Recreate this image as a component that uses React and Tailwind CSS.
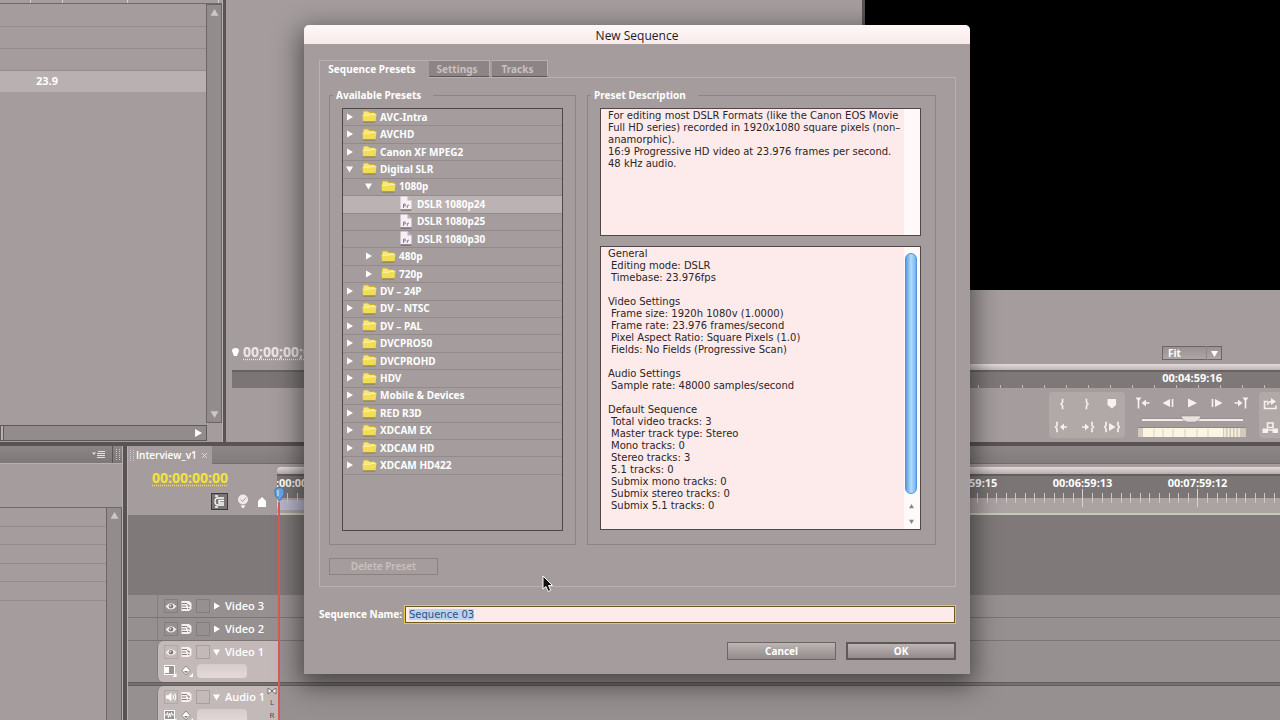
import React, { useEffect, useRef, useState } from "react";

const presets = [
  { name: "AVC-Intra", depth: 0 },
  { name: "AVCHD", depth: 0 },
  { name: "Canon XF MPEG2", depth: 0 },
  { name: "Digital SLR", depth: 0, open: true },
  { name: "1080p", depth: 1, open: true },
  { name: "DSLR 1080p24", depth: 2, file: true },
  { name: "DSLR 1080p25", depth: 2, file: true },
  { name: "DSLR 1080p30", depth: 2, file: true },
  { name: "480p", depth: 1 },
  { name: "720p", depth: 1 },
  { name: "DV – 24P", depth: 0 },
  { name: "DV – NTSC", depth: 0 },
  { name: "DV – PAL", depth: 0 },
  { name: "DVCPRO50", depth: 0 },
  { name: "DVCPROHD", depth: 0 },
  { name: "HDV", depth: 0 },
  { name: "Mobile & Devices", depth: 0 },
  { name: "RED R3D", depth: 0 },
  { name: "XDCAM EX", depth: 0 },
  { name: "XDCAM HD", depth: 0 },
  { name: "XDCAM HD422", depth: 0 },
];

const indents = ["pl-[3px]", "pl-[22px]", "pl-[57px]"];

const settings = [
  { title: "General", lines: ["Editing mode: DSLR", "Timebase: 23.976fps"] },
  {
    title: "Video Settings",
    lines: [
      "Frame size: 1920h 1080v (1.0000)",
      "Frame rate: 23.976 frames/second",
      "Pixel Aspect Ratio: Square Pixels (1.0)",
      "Fields: No Fields (Progressive Scan)",
    ],
  },
  { title: "Audio Settings", lines: ["Sample rate: 48000 samples/second"] },
  {
    title: "Default Sequence",
    lines: [
      "Total video tracks: 3",
      "Master track type: Stereo",
      "Mono tracks: 0",
      "Stereo tracks: 3",
      "5.1 tracks: 0",
      "Submix mono tracks: 0",
      "Submix stereo tracks: 0",
      "Submix 5.1 tracks: 0",
    ],
  },
];

/* ---------- icons ---------- */

function Triangle({ dir = "right", className = "w-[7px] h-[7px] text-white" }) {
  const shapes = {
    right: "1,0 7,3.5 1,7",
    down: "0,1 7,1 3.5,7",
    up: "0,6 7,6 3.5,0",
  };
  return (
    <svg viewBox="0 0 7 7" className={`shrink-0 ${className}`} fill="currentColor">
      <polygon points={shapes[dir]} />
    </svg>
  );
}

function FolderIcon() {
  return (
    <svg width="15" height="13" viewBox="0 0 15 13" className="shrink-0">
      <path d="M1 2 Q1 0.5 2.5 0.5 H6 L7.5 2 H12 Q13 2 13 3 V11 H1 Z" fill="#cfae30" />
      <path d="M1.5 1.5 H6 L7.5 3 H12.5 V5 H1.5 Z" fill="#f6e680" />
      <path d="M0.5 4.5 H8 L9 3.7 H14.5 L13.5 11.5 H1 Z" fill="#f2dd55" />
      <path d="M1.5 5.2 H8.3 L9.2 4.4 H13.5" stroke="#fdf6b8" strokeWidth="1" fill="none" />
      <path d="M1 12 H13.5" stroke="#8b7a3c" strokeWidth="1" />
    </svg>
  );
}

function PresetIcon() {
  return (
    <svg width="12" height="15" viewBox="0 0 12 15" className="shrink-0">
      <path d="M0.5 0.5 H7.5 L11.5 4.5 V13.5 H0.5 Z" fill="#f8eff4" />
      <path d="M7.5 0.5 V4.5 H11.5 Z" fill="#b8aebb" />
      <path d="M3.5 12 V8 H5.2 V10 H3.5 M7.3 12 V9.2 M7.3 9.8 L9 9" stroke="#8d7f9b" strokeWidth="1" fill="none" />
      <path d="M0.5 14 H11.5" stroke="#5b5458" strokeWidth="1" />
    </svg>
  );
}

function EyeIcon() {
  return (
    <svg width="12" height="9" viewBox="0 0 12 9">
      <path d="M0.5 4.5 Q6 -2 11.5 4.5 Q6 10.5 0.5 4.5 Z" fill="#f4ecec" />
      <circle cx="6" cy="4.3" r="2.2" fill="#7d7676" />
      <circle cx="5.4" cy="3.7" r="0.8" fill="#fff" />
    </svg>
  );
}

function SpeakerIcon() {
  return (
    <svg width="13" height="12" viewBox="0 0 13 12" fill="none" stroke="#fff" strokeWidth="1.2">
      <path d="M1 4 H3.5 L7 1 V11 L3.5 8 H1 Z" fill="#fff" stroke="none" />
      <path d="M8.5 4 Q9.7 6 8.5 8 M10.3 2.3 Q12.8 6 10.3 9.7" />
    </svg>
  );
}

function SyncIcon() {
  return (
    <svg width="11" height="10" viewBox="0 0 11 10">
      <path d="M0.5 0 H8 L10.5 2 V8 L8 10 H0.5 Z" fill="#f8f0f0" />
      <path d="M1 2.5 H6 M1 5 H5 M1 7.5 H6 M7 3 V5 H9 M7 7.5 H8.5" stroke="#857e7e" strokeWidth="1" fill="none" />
    </svg>
  );
}

function DiamondIcon() {
  return (
    <svg width="12" height="12" viewBox="0 0 12 12">
      <path d="M5 1 L9 5.5 L5 10 L1 5.5 Z" fill="#fff" stroke="#7d7676" strokeWidth="0.8" />
      <path d="M3 6 H7 L5 8.5 Z" fill="#8d8686" />
      <path d="M12 8 V12 H8 Z" fill="#fff" />
    </svg>
  );
}

function StyleIcon({ audio }) {
  return (
    <svg width="13" height="12" viewBox="0 0 13 12">
      <rect x="0.5" y="0.5" width="10" height="9" fill="#9b9393" stroke="#fff" />
      {audio ? (
        <path d="M1 5 H2.5 L3.5 2.5 L4.5 7.5 L5.5 3 L6.5 7 L7.5 2.5 L8.5 5 H10" stroke="#fff" fill="none" />
      ) : (
        <rect x="1" y="2" width="4" height="6" fill="#fff" />
      )}
      <path d="M12.5 8 V12 H8.5 Z" fill="#fff" />
    </svg>
  );
}

// line = stroked part, solid = filled part
const transport = {
  "Set In Point": { line: "M9.5 3.5 H8.5 V6.5 L7 8 L8.5 9.5 V12.5 H9.5" },
  "Set Out Point": { line: "M6.5 3.5 H7.5 V6.5 L9 8 L7.5 9.5 V12.5 H6.5" },
  "Set Marker": { solid: "M3.5 3 H12 V9 L8 12.5 L3.5 9 Z" },
  "Go to In Point": {
    line: "M4 3.5 H3 V6.5 L1.5 8 L3 9.5 V12.5 H4 M9 8 H13",
    solid: "M6 8 L10 4.5 V11.5 Z",
  },
  "Go to Out Point": {
    line: "M12 3.5 H13 V6.5 L14.5 8 L13 9.5 V12.5 H12 M3 8 H7",
    solid: "M10 8 L6 4.5 V11.5 Z",
  },
  "Play In to Out": {
    line: "M3 3.5 H2 V6.5 L0.5 8 L2 9.5 V12.5 H3 M13 3.5 H14 V6.5 L15.5 8 L14 9.5 V12.5 H13",
    solid: "M5 4 L11.5 8 L5 12 Z",
  },
  "Go to Previous Edit": {
    line: "M3.5 5 V13.5 M10 8 H14.5",
    solid: "M0.5 2.5 H6.5 L3.5 6.5 Z M6.5 8 L11 4.5 V11.5 Z",
  },
  "Step Back": { line: "M12.5 4 V12", solid: "M10 4 L2.5 8 L10 12 Z" },
  Play: { solid: "M4 3.5 L13 8 L4 12.5 Z" },
  "Step Forward": { line: "M3.5 4 V12", solid: "M6 4 L13.5 8 L6 12 Z" },
  "Go to Next Edit": {
    line: "M12.5 5 V13.5 M1.5 8 H6",
    solid: "M9.5 2.5 H15.5 L12.5 6.5 Z M9.5 8 L5 4.5 V11.5 Z",
  },
  Loop: { line: "M6 5.5 H2.5 V12.5 H14 V9.5 M5.5 9 Q6 5.5 10 5.5", solid: "M9 2 L14 5.5 L9 9 Z" },
  "Safe Margins": {
    line: "M5.5 4 H11 V8.5 H5.5 Z M6 11 H11",
    solid: "M0.5 9.5 H6 V14 H0.5 Z M10.5 9.5 H16 V14 H10.5 Z",
  },
};

function TransportButton({ name }) {
  const { line, solid } = transport[name];
  return (
    <button type="button" aria-label={name} className="flex items-center justify-center">
      <svg width="16" height="16" viewBox="0 0 16 16">
        {line && <path d={line} fill="none" stroke="#f8f0f0" strokeWidth="1.6" />}
        {solid && <path d={solid} fill="#f8f0f0" />}
      </svg>
    </button>
  );
}

/* ---------- workspace panels ---------- */

function ProjectPanel() {
  return (
    <section className="flex w-[223px] shrink-0 flex-col border-r border-[#b8b0b0]">
      <div className="flex h-1 shrink-0 border-b border-[#6f6969]">
        <span className="w-[31px] border-r border-[#d8d0d0]" />
        <span className="w-8 border-r border-[#d8d0d0]" />
        <span className="w-[65px] border-r border-[#d8d0d0]" />
        <span className="w-[91px] border-r border-[#d8d0d0]" />
      </div>
      <div className="flex min-h-0 flex-1">
        <div className="flex-1">
          <div className="h-[23px] border-b border-[#958d8d]" />
          <div className="h-[22px] border-b border-[#958d8d]" />
          <div className="h-[22px] border-b border-[#958d8d]" />
          <div className="flex h-[21px] items-center bg-[#b9b1b1] pl-9 text-[11px] font-bold text-white">
            23.9
          </div>
        </div>
        <div className="flex w-4 flex-col items-center justify-between border border-[#6b6565] bg-[#938c8c] py-1">
          <Triangle dir="up" className="h-2 w-[9px] text-[#cfc6c6]" />
          <Triangle dir="down" className="h-2 w-[9px] text-[#cfc6c6]" />
        </div>
      </div>
      <div className="mt-[2px] mb-px flex h-4 w-[207px] shrink-0 items-center justify-between border border-[#5f5959] bg-[#938c8c] pr-1">
        <span className="h-full w-[3px] border-r border-[#5f5959] bg-[#b9b1b1]" />
        <Triangle className="h-[10px] w-2 text-white" />
      </div>
    </section>
  );
}

function SourceMonitor() {
  return (
    <section className="flex min-w-0 flex-1 flex-col justify-end pl-[6px]">
      <div className="flex items-center gap-1 text-[14px] leading-[18px] font-bold text-[#eee5ea]">
        <svg width="7" height="9" viewBox="0 0 7 9" className="mt-px" fill="#fff">
          <path d="M0 3 Q0 0 3.5 0 Q7 0 7 3 L5 8 H2 Z" />
        </svg>
        <span className="underline decoration-dotted underline-offset-2">00;00;00;00</span>
      </div>
      <div className="mt-[9px] mb-[54px] h-[18px] border-t-2 border-[#696363] bg-[#7b7575]" />
    </section>
  );
}

function ProgramMonitor() {
  return (
    <section className="flex w-[415px] shrink-0 flex-col">
      <div className="flex-1 bg-black" />
      <div className="flex h-[74px] items-end justify-end pr-[58px] pb-1">
        <div className="relative flex">
          <select
            aria-label="Zoom level"
            className="h-[14px] w-[60px] appearance-none border border-[#6b6565] bg-gradient-to-b from-[#9a9292] to-[#aea6a6] pl-[5px] text-[10px] leading-3 font-bold text-white"
          >
            <option>Fit</option>
          </select>
          <span className="pointer-events-none absolute inset-y-0 right-1 flex items-center border-l border-[#8d8585] pl-1">
            <Triangle dir="down" />
          </span>
        </div>
      </div>
      <div className="h-[6px] bg-gradient-to-b from-[#e5dbdb] to-[#bdb4b4]" />
      <div className="flex h-[18px] flex-col items-end justify-between border-t-2 border-[#696363] bg-[#7e7878]">
        <span className="mr-[58px] text-[11px] leading-[11px] font-bold text-white">00:04:59:16</span>
        <svg width="100%" height="3">
          <defs>
            <pattern id="programTicks" width="22" height="3" x="3" patternUnits="userSpaceOnUse">
              <rect width="1" height="3" fill="#c3bbbb" />
            </pattern>
          </defs>
          <rect width="100%" height="3" fill="url(#programTicks)" />
        </svg>
      </div>
      <div className="flex h-[54px] justify-end gap-[10px] pt-1">
        <div className="grid h-[46px] w-[76px] grid-cols-3 grid-rows-2 rounded bg-[#b1a8a8]">
          {["Set In Point", "Set Out Point", "Set Marker", "Go to In Point", "Go to Out Point", "Play In to Out"].map(
            (name) => (
              <TransportButton key={name} name={name} />
            )
          )}
        </div>
        <div className="flex h-[46px] w-[114px] flex-col">
          <div className="flex h-[21px] items-center justify-between">
            {["Go to Previous Edit", "Step Back", "Play", "Step Forward", "Go to Next Edit"].map((name) => (
              <TransportButton key={name} name={name} />
            ))}
          </div>
          <svg width="114" height="25" viewBox="0 0 114 25">
            <path d="M7 7 H108" stroke="#f3eaea" strokeWidth="2" />
            <path d="M7 5.5 H108" stroke="#8b8383" strokeWidth="0.5" />
            <path d="M46 3 H66 L64 7 L60 9 H52 L48 7 Z" fill="#eae0e0" stroke="#8b8383" strokeWidth="0.5" />
            <rect x="3" y="14" width="108" height="10" fill="#d3cabd" />
            <rect x="8" y="15" width="80" height="9" fill="#fbf6e2" />
            <path
              d="M6 16 V24 M19 16 V24 M28 16 V24 M38 16 V24 M50 16 V24 M62 16 V24 M73 16 V24"
              stroke="#d8d0bd"
            />
            <path
              d="M90 15 V24 M93.5 15 V24 M97 15 V24 M100.5 15 V24 M104 15 V24"
              stroke="#fbf6e2"
              strokeWidth="1.5"
            />
            <path d="M3 14.5 H111" stroke="#8f8780" />
          </svg>
        </div>
        <div className="grid h-[46px] w-[21px] grid-rows-2 rounded-l bg-[#b1a8a8]">
          <TransportButton name="Loop" />
          <TransportButton name="Safe Margins" />
        </div>
      </div>
    </section>
  );
}

function EffectsPanel() {
  return (
    <section className="flex w-[123px] shrink-0 flex-col border-r border-[#b8b0b0]">
      <div className="flex h-[18px] items-center justify-end border-b border-[#b8b0b0] bg-gradient-to-b from-[#8d8686] to-[#7d7777]">
        <svg width="14" height="9" viewBox="0 0 14 9" stroke="#e8dfdf">
          <path d="M0 2.5 H4 L2 5 Z" fill="#e8dfdf" stroke="none" />
          <path d="M6 1.5 H13 M5 3.5 H13 M5 5.5 H13 M5 7.5 H13" />
        </svg>
        <Grip className="ml-[6px] h-full w-[10px] border-l border-[#5b5555]" />
      </div>
      <div className="h-11 border-b border-[#6f6969]" />
      <div className="flex flex-1">
        <div className="flex h-[93px] flex-1 flex-col">
          {[0, 1, 2, 3, 4].map((row) => (
            <div key={row} className="flex-1 border-b border-[#938b8b]" />
          ))}
        </div>
        <div className="flex w-4 justify-center border-x border-[#6b6565] bg-[#938c8c] pt-1">
          <Triangle dir="up" className="h-2 w-[9px] text-[#cfc6c6]" />
        </div>
      </div>
    </section>
  );
}

function Grip({ className }) {
  return (
    <span className={`flex items-center justify-center ${className}`}>
      <svg width="4" height="11" viewBox="0 0 4 11">
        <path d="M0.5 0 V11 M3.5 0 V11" stroke="#cfc6c6" strokeDasharray="1 1" />
      </svg>
    </span>
  );
}

function TrackHead({ name, open, audio }) {
  return (
    <div
      className={`flex w-[121px] shrink-0 flex-col border-l border-[#857e7e] pl-[6px] ${
        open ? "rounded-l-md bg-[#c3b9b9]" : ""
      }`}
    >
      <div className="flex h-[22px] items-center">
        <span
          className={`flex h-[14px] w-[14px] items-center justify-center border ${
            open ? "border-[#b0a7a7]" : "border-[#857e7e]"
          }`}
        >
          {audio ? <SpeakerIcon /> : <EyeIcon />}
        </span>
        <span className="ml-px flex h-[14px] w-[14px] items-center justify-center">
          <SyncIcon />
        </span>
        <span className={`ml-[3px] h-[14px] w-[14px] border ${open ? "border-[#a79e9e]" : "border-[#857e7e]"}`} />
        <Triangle dir={open ? "down" : "right"} className="ml-[3px] h-2 w-[7px] text-white" />
        <span className="ml-[5px] text-[11px] font-semibold whitespace-nowrap text-white">{name}</span>
      </div>
      {open && (
        <div className="flex h-[15px] items-center gap-[4px]">
          <StyleIcon audio={audio} />
          <DiamondIcon />
          <span className="h-[14px] w-[50px] rounded bg-gradient-to-b from-[#d6cccc] to-[#e3dada]" />
        </div>
      )}
    </div>
  );
}

function RulerLabel({ children, className = "" }) {
  return (
    <span className={`w-[115px] shrink-0 text-center text-[11px] leading-[14px] font-bold text-white ${className}`}>
      {children}
    </span>
  );
}

function Timeline() {
  return (
    <section className="relative flex min-w-0 flex-1 flex-col border-l border-[#b8b0b0]">
      <div className="flex h-[18px] border-b border-[#736d6d] bg-gradient-to-b from-[#8d8686] to-[#837c7c]">
        <div className="flex h-[19px] w-[84px] shrink-0 items-center bg-[#a59d9d] text-[10px] font-semibold text-white">
          <Grip className="w-[7px]" />
          <span className="ml-px">Interview_v1</span>
          <button type="button" aria-label="Close tab" className="ml-1">
            <svg width="7" height="7" viewBox="0 0 7 7" stroke="#e0d7d7">
              <path d="M1 1 L6 6 M6 1 L1 6" />
            </svg>
          </button>
        </div>
      </div>
      <div className="flex h-[51px]">
        <div className="flex w-[149px] shrink-0 flex-col pt-1">
          <span className="pl-6 text-[14px] leading-5 font-bold text-[#f3e338] underline decoration-dotted underline-offset-2">
            00:00:00:00
          </span>
          <div className="mt-[5px] flex items-center gap-[9px] pl-[83px]">
            <button
              type="button"
              aria-label="Snap"
              className="flex h-[17px] w-[17px] items-center justify-center border border-[#3f3a3a] bg-[#7b7474]"
            >
              <svg width="13" height="13" viewBox="0 0 13 13" fill="none" stroke="#fff" strokeWidth="1.3">
                <path d="M11 3 H5 Q2 3 2 6.5 Q2 10 5 10 H11 M11 5.5 H6 V8 H11 M2 1 H5 M2 12 H5" />
              </svg>
            </button>
            <svg width="12" height="15" viewBox="0 0 12 15">
              <circle cx="6" cy="5.5" r="5" fill="#f1e8e8" />
              <path d="M3.5 5.5 L5.5 7.5 L9 3.5" stroke="#a29a9a" fill="none" />
              <path d="M3.5 11.5 H8.5 L6 14.5 Z" fill="#fff" />
            </svg>
            <svg width="8" height="10" viewBox="0 0 8 10" fill="#fff">
              <path d="M4 0 L8 4 V10 H0 V4 Z" />
            </svg>
          </div>
        </div>
        <div className="min-w-0 flex-1 overflow-hidden border-b-2 border-[#c4c9b4] pt-[3px]">
          <div className="h-[7px] rounded-l bg-gradient-to-b from-[#e5dbdb] to-[#b5acac]" />
          <div className="flex h-[15px] border-t-2 border-[#655f5f] bg-[#7b7575]">
            <RulerLabel className="-ml-[57px]">00:00:00:00</RulerLabel>
            <RulerLabel className="ml-[575px]">00:05:59:15</RulerLabel>
            <RulerLabel>00:06:59:13</RulerLabel>
            <RulerLabel>00:07:59:12</RulerLabel>
          </div>
          <svg width="100%" height="24" className="block">
            <defs>
              <pattern id="ticks" width="115" height="24" x="0" patternUnits="userSpaceOnUse">
                <path
                  d="M10.5 4 V14 M20.5 4 V14 M29.5 4 V14 M39.5 4 V14 M48.5 4 V14 M58.5 4 V14 M67.5 4 V14 M77.5 4 V14 M87.5 4 V14 M96.5 4 V14 M106.5 4 V14"
                  stroke="#cfc7c7"
                />
                <path d="M0.5 0 V18" stroke="#d9d1d1" />
              </pattern>
            </defs>
            <rect width="100%" height="9" fill="#7b7575" />
            <rect y="9" width="100%" height="15" fill="#aba2a2" />
            <rect y="11" width="60" height="10" fill="#b9b6cc" />
            <rect width="100%" height="24" fill="url(#ticks)" />
          </svg>
        </div>
      </div>
      <div className="flex flex-1 flex-col bg-[#979090]">
        <div className="h-20 bg-[#7f7979]" />
        {["Video 3", "Video 2"].map((name) => (
          <div key={name} className="flex h-[23px] border-b border-[#7b7474] pl-[29px]">
            <TrackHead name={name} />
          </div>
        ))}
        <div className="flex h-[41px] pl-[29px]">
          <TrackHead name="Video 1" open />
        </div>
        <div className="h-[4px] border-y border-[#625c5c] bg-[#776f6f]" />
        <div className="flex h-[41px] pl-[29px]">
          <TrackHead name="Audio 1" open audio />
          <div className="-ml-[12px] flex w-3 flex-col items-center pt-px text-[8px] leading-[13px] text-[#4d4747]">
            <svg width="10" height="8" viewBox="0 0 10 8">
              <path d="M1 1 L5 4 L1 7 Z M9 1 L5 4 L9 7 Z" fill="#fff" stroke="#5d5757" strokeWidth="0.8" />
            </svg>
            <span>L</span>
            <span>R</span>
          </div>
        </div>
      </div>
      {/* playhead */}
      <div className="absolute top-[41px] bottom-0 left-[145px] flex w-3 flex-col items-center">
        <svg width="11" height="15" viewBox="0 0 11 15" className="shrink-0">
          <path d="M1 3 Q1 1 5.5 0.5 Q10 1 10 3 V8 L5.5 14 L1 8 Z" fill="#6aa5e0" stroke="#3f76b4" />
          <path d="M4 3 V9" stroke="#bfdcf5" strokeWidth="1.5" />
        </svg>
        <span className="w-[2px] flex-1 bg-[#d95a5a]" />
      </div>
    </section>
  );
}

/* ---------- dialog ---------- */

function PresetTree() {
  const [selected, setSelected] = useState("DSLR 1080p24");

  return (
    <div className="h-[423px] border border-[#4d4747]">
      <ul className="flex h-[366px] flex-col">
        {presets.map((item) => (
          <li
            key={item.name}
            className={`min-h-0 flex-1 border-b border-[#938b8b] ${selected === item.name ? "bg-[#bbb3b3]" : ""}`}
          >
            <button
              type="button"
              onClick={() => setSelected(item.name)}
              className={`flex h-full w-full items-center pb-px text-[10px] leading-4 font-bold whitespace-nowrap text-white ${
                indents[item.depth]
              }`}
            >
              {!item.file && <Triangle dir={item.open ? "down" : "right"} className="mr-[9px] h-2 w-[7px] text-white" />}
              {item.file ? <PresetIcon /> : <FolderIcon />}
              <span className={item.file ? "ml-[5px]" : "ml-[3px]"}>{item.name}</span>
            </button>
          </li>
        ))}
      </ul>
    </div>
  );
}

function Group({ title, className, children }) {
  return (
    <fieldset className={`h-[457px] border border-[#8d8585] pt-[6px] pl-3 ${className}`}>
      <legend className="-ml-[9px] pr-3 pl-[3px] text-[10px] leading-[14px] font-bold text-white">{title}</legend>
      {children}
    </fieldset>
  );
}

function NewSequenceDialog() {
  const [name, setName] = useState("Sequence 03");
  const nameRef = useRef(null);

  useEffect(() => {
    nameRef.current.focus();
    nameRef.current.select();
  }, []);

  return (
    <div
      role="dialog"
      aria-labelledby="dialog-title"
      className="w-[666px] rounded-t-[5px] bg-[#a59d9d] shadow-[0_8px_26px_4px_rgba(0,0,0,0.5)]"
    >
      <h1
        id="dialog-title"
        className="h-[19px] rounded-t-[5px] bg-gradient-to-b from-[#fff8f8] to-[#f8eaea] text-center text-[12px] leading-[21px] text-[#1f1b1b]"
      >
        New Sequence
      </h1>
      <form
        className="pt-4 pr-[14px] pb-[14px] pl-[15px] font-['Noto_Sans',sans-serif]"
        onSubmit={(e) => e.preventDefault()}
      >
        <div role="tablist" className="flex items-start text-[10px] font-bold">
          <button
            type="button"
            role="tab"
            aria-selected="true"
            className="-mb-px h-[18px] w-[109px] border-t border-l border-[#b9b1b1] bg-[#a59d9d] pr-1 leading-[17px] text-white"
          >
            Sequence Presets
          </button>
          <button
            type="button"
            role="tab"
            aria-selected="false"
            className="ml-px h-[17px] w-[61px] border-t border-r border-b border-t-[#b9b1b1] border-r-[#b9b1b1] border-b-[#5d5757] bg-[#8d8585] pr-1 leading-[16px] text-[#c9c0c0]"
          >
            Settings
          </button>
          <button
            type="button"
            role="tab"
            aria-selected="false"
            className="ml-[2px] h-[17px] w-[56px] border-t border-r border-b border-t-[#b9b1b1] border-r-[#b9b1b1] border-b-[#5d5757] bg-[#8d8585] pr-1 leading-[16px] text-[#c9c0c0]"
          >
            Tracks
          </button>
        </div>

        <div className="border border-[#b9b1b1] pt-[10px] pb-[11px] pl-[9px]">
          <div className="flex gap-[11px]">
            <Group title="Available Presets" className="w-[247px] pr-3">
              <PresetTree />
            </Group>
            <Group title="Preset Description" className="w-[349px] pr-[14px]">
              <div className="flex h-[128px] border border-[#4d4747] bg-[#fcebea] font-['DejaVu_Sans',sans-serif] text-[10px] leading-3 text-[#2b2626]">
                <div className="w-[303px] pt-px pl-[7px] whitespace-nowrap">
                  <p>
                    For editing most DSLR Formats (like the Canon EOS Movie
                    <br />
                    Full HD series) recorded in 1920x1080 square pixels (non–
                    <br />
                    anamorphic).
                  </p>
                  <p>16:9 Progressive HD video at 23.976 frames per second.</p>
                  <p>48 kHz audio.</p>
                </div>
                <div className="flex-1 bg-[#fff9fa]" />
              </div>
              <div className="mt-[10px] flex h-[284px] border border-[#4d4747] bg-[#fcebea] font-['DejaVu_Sans',sans-serif] text-[10px] leading-3 text-[#2b2626]">
                <div className="flex w-[303px] flex-col gap-3 pt-px pl-[7px]">
                  {settings.map((group) => (
                    <div key={group.title}>
                      <p>{group.title}</p>
                      {group.lines.map((line) => (
                        <p key={line} className="pl-[3px]">
                          {line}
                        </p>
                      ))}
                    </div>
                  ))}
                </div>
                <div className="flex flex-1 flex-col items-center bg-[#fff9fa] pt-[6px] pr-[2px]">
                  <div className="h-[241px] w-3 rounded-full border border-[#5a8fd8] bg-gradient-to-r from-[#5f9be6] via-[#b5dcfb] to-[#6db4f3]" />
                  <Triangle dir="up" className="mt-[10px] h-[5px] w-[5px] text-[#8d8585]" />
                  <Triangle dir="down" className="mt-[10px] h-[5px] w-[5px] text-[#8d8585]" />
                </div>
              </div>
            </Group>
          </div>
          <button
            type="button"
            disabled
            className="mt-[13px] block h-[17px] w-[109px] border border-[#8b8383] text-[10px] leading-[15px] font-semibold text-[#c9c0c0]"
          >
            Delete Preset
          </button>
        </div>

        <div className="mt-[18px] flex items-center justify-between">
          <label htmlFor="sequence-name" className="text-[10px] font-bold whitespace-nowrap text-white">
            Sequence Name:
          </label>
          <input
            id="sequence-name"
            ref={nameRef}
            type="text"
            value={name}
            onChange={(e) => setName(e.target.value)}
            className="h-[19px] w-[552px] shrink-0 border-2 border-[#e3cb3b] bg-[#fcebea] px-[3px] font-['DejaVu_Sans',sans-serif] text-[10px] text-[#2b2626] outline-1 -outline-offset-2 outline-[#6b5a1a] selection:bg-[#b9d3f2] selection:text-[#34507c]"
          />
        </div>

        <div className="mt-[18px] flex justify-end gap-[10px] text-[10px] font-bold text-white">
          <button
            type="button"
            className="h-[18px] w-[109px] border border-[#6b6565] bg-gradient-to-b from-[#bdb4b4] to-[#938b8b] leading-[16px]"
          >
            Cancel
          </button>
          <button
            type="submit"
            className="h-[18px] w-[110px] border-2 border-[#5f5959] bg-gradient-to-b from-[#bdb4b4] to-[#938b8b] leading-[14px]"
          >
            OK
          </button>
        </div>
      </form>
    </div>
  );
}

export default function App() {
  return (
    <div className="relative flex h-screen flex-col overflow-hidden bg-[#595353] font-['Open_Sans','Noto_Sans',sans-serif]">
      <div className="flex h-[442px] shrink-0 gap-[3px] [&>section]:bg-[#a59d9d]">
        <ProjectPanel />
        <SourceMonitor />
        <ProgramMonitor />
      </div>
      <div className="mt-1 flex min-h-0 flex-1 gap-1 [&>section]:bg-[#a59d9d]">
        <EffectsPanel />
        <Timeline />
      </div>

      <div className="absolute inset-0 flex items-start justify-center pt-[25px] pr-[6px]">
        <NewSequenceDialog />
      </div>

      {/* mouse pointer */}
      <svg width="12" height="18" viewBox="0 0 12 18" className="pointer-events-none absolute top-[575px] left-[542px]">
        <path d="M1 1 V14 L4 11.5 L6.2 16.5 L8.7 15.3 L6.5 10.5 H10.5 Z" fill="#111" stroke="#fff" />
      </svg>
    </div>
  );
}
